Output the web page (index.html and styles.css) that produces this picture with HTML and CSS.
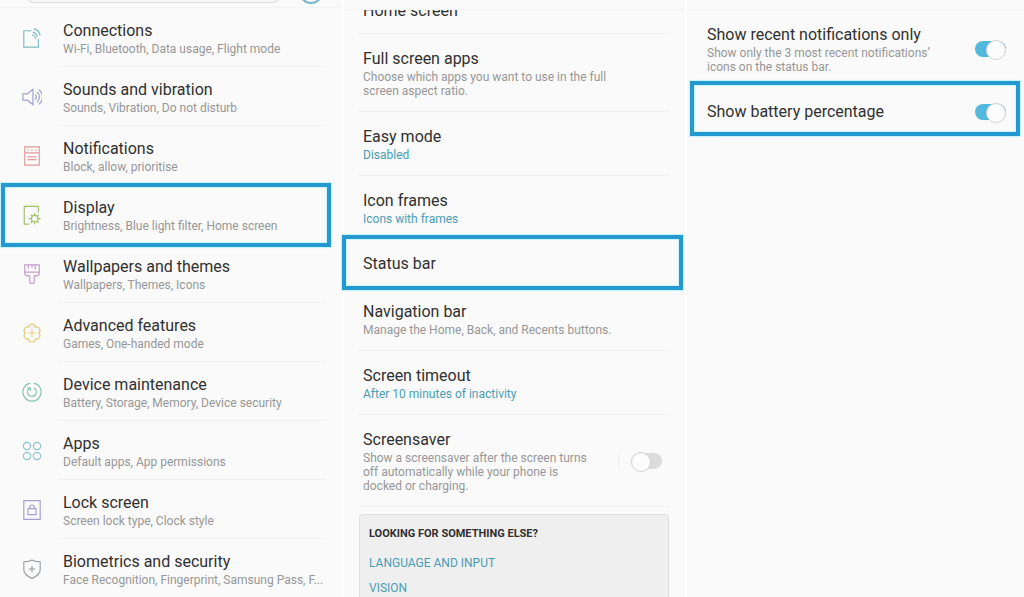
FILE: index.html
```html
<!DOCTYPE html>
<html lang="en">
<head>
    <meta charset="UTF-8">
    <meta name="viewport" content="width=device-width, initial-scale=1.0">
    <title>Settings</title>
    <link rel="stylesheet" href="styles.css">
</head>
<body>
    <main class="screens">

        <!-- Settings list -->
        <section class="screen screen-settings">
            <div class="topbar">
                <div class="search-box"></div>
                <div class="avatar"></div>
            </div>
            <a href="#" class="row">
                <svg class="icon teal" viewBox="0 0 22 22"><path d="M10 3H2v18h16v-9M11 8a4 4 0 0 1 4 4M12 4.500a7 7 0 0 1 5 5M13 1a9 9 0 0 1 7 7"/></svg>
                <span class="text">
                    <span class="title">Connections</span>
                    <span class="sub">Wi-Fi, Bluetooth, Data usage, Flight mode</span>
                </span>
            </a>
            <a href="#" class="row">
                <svg class="icon indigo" viewBox="0 0 22 22"><path d="M1 7.500v7h5l6 5v-17l-6 5zM14.500 8a4 4 0 0 1 0 6M16.500 5.500a7 7 0 0 1 0 11M18.500 3a10 10 0 0 1 0 16"/></svg>
                <span class="text">
                    <span class="title">Sounds and vibration</span>
                    <span class="sub">Sounds, Vibration, Do not disturb</span>
                </span>
            </a>
            <a href="#" class="row">
                <svg class="icon red" viewBox="0 0 22 22"><path d="M3 1h16v20H3zM3 7.500h16M6 12h10M6 15h10M6 4.500h1.500M10.200 4.500h1.500M14.500 4.500H16"/></svg>
                <span class="text">
                    <span class="title">Notifications</span>
                    <span class="sub">Block, allow, prioritise</span>
                </span>
            </a>
            <a href="#" class="row highlight">
                <svg class="icon green" viewBox="0 0 22 22"><path d="M8 21H2.500V1.500H18V8"/><circle cx="14" cy="15" r="3.500"/><path d="M14 8.500v3M14 18.500v3M7.500 15h3M17.500 15h3M9.500 10.500l2 2M16.500 17.500l2 2M18.500 10.500l-2 2M11.500 17.500l-2 2"/></svg>
                <span class="text">
                    <span class="title">Display</span>
                    <span class="sub">Brightness, Blue light filter, Home screen</span>
                </span>
            </a>
            <a href="#" class="row">
                <svg class="icon purple" viewBox="0 0 22 22"><path d="M3 1h16v10l-2 2h-3.500v6a2.500 2.500 0 0 1-5 0v-6H5l-2-2zM3 9h16M7 1v4M11 1v3M14.500 1v5"/></svg>
                <span class="text">
                    <span class="title">Wallpapers and themes</span>
                    <span class="sub">Wallpapers, Themes, Icons</span>
                </span>
            </a>
            <a href="#" class="row">
                <svg class="icon yellow" viewBox="0 0 22 22"><path d="M7.400 4.800A3.600 3.600 0 0 1 14.600 4.800A3.600 3.600 0 0 1 18.200 11A3.600 3.600 0 0 1 14.600 17.200A3.600 3.600 0 0 1 7.400 17.200A3.600 3.600 0 0 1 3.800 11A3.600 3.600 0 0 1 7.400 4.800zM11 7v8M7 11h8"/></svg>
                <span class="text">
                    <span class="title">Advanced features</span>
                    <span class="sub">Games, One-handed mode</span>
                </span>
            </a>
            <a href="#" class="row">
                <svg class="icon mint" viewBox="0 0 22 22"><path d="M13 1.200a10 10 0 1 1-4 0M13 6.600a4.800 4.800 0 1 1-4.500 0.200M6 6.500h3V10"/></svg>
                <span class="text">
                    <span class="title">Device maintenance</span>
                    <span class="sub">Battery, Storage, Memory, Device security</span>
                </span>
            </a>
            <a href="#" class="row">
                <svg class="icon sky" viewBox="0 0 22 22"><circle cx="5.500" cy="5.500" r="4"/><circle cx="16.500" cy="5.500" r="4"/><circle cx="5.500" cy="16.500" r="4"/><circle cx="16.500" cy="16.500" r="4"/></svg>
                <span class="text">
                    <span class="title">Apps</span>
                    <span class="sub">Default apps, App permissions</span>
                </span>
            </a>
            <a href="#" class="row">
                <svg class="icon violet" viewBox="0 0 22 22"><path d="M2 0.700h18v20.600H2zM6.500 9.500h9v6.500h-9zM8.500 9.500V8a2.500 2.500 0 0 1 5 0v1.500"/></svg>
                <span class="text">
                    <span class="title">Lock screen</span>
                    <span class="sub">Screen lock type, Clock style</span>
                </span>
            </a>
            <a href="#" class="row">
                <svg class="icon slate" viewBox="0 0 22 22"><path d="M11 1c3 2 6 2 9 2v9c0 4-4 7-9 9.300C6 19 2 16 2 12V3c3 0 6 0 9-2zM11 7.500v7M7.500 11h7"/></svg>
                <span class="text">
                    <span class="title">Biometrics and security</span>
                    <span class="sub">Face Recognition, Fingerprint, Samsung Pass, F...</span>
                </span>
            </a>
        </section>

        <!-- Display settings -->
        <section class="screen screen-display">
            <div class="topbar"></div>
            <div class="scrolled">
                <a href="#" class="row">
                    <span class="title">Home screen</span>
                </a>
            </div>
            <a href="#" class="row">
                <span class="text">
                    <span class="title">Full screen apps</span>
                    <span class="sub">Choose which apps you want to use in the full screen aspect ratio.</span>
                </span>
            </a>
            <a href="#" class="row">
                <span class="text">
                    <span class="title">Easy mode</span>
                    <span class="sub value">Disabled</span>
                </span>
            </a>
            <a href="#" class="row">
                <span class="text">
                    <span class="title">Icon frames</span>
                    <span class="sub value">Icons with frames</span>
                </span>
            </a>
            <a href="#" class="row single highlight">
                <span class="title">Status bar</span>
            </a>
            <a href="#" class="row">
                <span class="text">
                    <span class="title">Navigation bar</span>
                    <span class="sub">Manage the Home, Back, and Recents buttons.</span>
                </span>
            </a>
            <a href="#" class="row">
                <span class="text">
                    <span class="title">Screen timeout</span>
                    <span class="sub value">After 10 minutes of inactivity</span>
                </span>
            </a>
            <div class="row">
                <label class="text" for="screensaver">
                    <span class="title">Screensaver</span>
                    <span class="sub">Show a screensaver after the screen turns off automatically while your phone is docked or charging.</span>
                </label>
                <span class="separator"></span>
                <input type="checkbox" id="screensaver" class="toggle">
            </div>
            <div class="more">
                <h2>LOOKING FOR SOMETHING ELSE?</h2>
                <a href="#">LANGUAGE AND INPUT</a>
                <a href="#">VISION</a>
            </div>
        </section>

        <!-- Status bar settings -->
        <section class="screen screen-status">
            <div class="topbar"></div>
            <div class="row">
                <label class="text" for="recent">
                    <span class="title">Show recent notifications only</span>
                    <span class="sub">Show only the 3 most recent notifications’ icons on the status bar.</span>
                </label>
                <input type="checkbox" id="recent" class="toggle" checked>
            </div>
            <div class="row single highlight">
                <label class="title" for="battery">Show battery percentage</label>
                <input type="checkbox" id="battery" class="toggle" checked>
            </div>
        </section>

    </main>
</body>
</html>
```
FILE: styles.css
```css
* {
    box-sizing: border-box;
}
body {
    margin: 0;
    font-family: Roboto, sans-serif;
    background-color: #fafafa;
    color: #303030;
}
a {
    color: inherit;
    text-decoration: none;
}
.screens {
    display: grid;
    grid-template-columns: 342fr 343fr 339fr;
    height: 100vh;
    overflow: hidden;
}
.screen {
    min-width: 0;
}
.screen + .screen {
    border-left: 2px solid #fff;
}
.topbar {
    display: flex;
    align-items: flex-end;
    height: 10px;
    border-bottom: 1px solid #f3f3f3;
}

/* Rows */
.row {
    position: relative;
    display: flex;
    align-items: center;
    margin: 0 16px 0 15px;
    padding: 14px 4px 13px;
    border-bottom: 1px solid #f0f0f0;
}
.text {
    flex: 1;
    min-width: 0;
}
.title {
    display: block;
    font-size: 16px;
    line-height: 22px;
}
.sub {
    display: block;
    font-size: 12px;
    line-height: 14px;
    color: #979797;
}
.sub.value {
    color: #4a9db5;
}
.highlight {
    border-bottom-color: transparent;
}
.highlight::after {
    content: "";
    position: absolute;
    border: 4px solid #2499cf;
    box-shadow: 0 0 1px 1px #c8f4ff, inset 0 0 1px 1px #c8f4ff;
    pointer-events: none;
}

/* Settings list */
.screen-settings .topbar {
    height: 8px;
}
.search-box {
    width: 252px;
    height: 8px;
    margin: 0 20px 4px 27px;
    border: 1px solid #dcdcdc;
    border-top: none;
    border-radius: 0 0 6px 6px;
    background-color: #f6f6f6;
}
.avatar {
    width: 24px;
    height: 24px;
    margin-bottom: 3px;
    border: 2px solid #78b4cc;
    border-radius: 50%;
}
.screen-settings .row {
    margin: 0 16px 0 0;
    padding: 12px 2px 11px 22px;
    border-bottom: none;
}
.screen-settings .row::before {
    content: "";
    position: absolute;
    left: 58px;
    right: 0;
    bottom: 0;
    border-bottom: 1px solid #f0f0f0;
}
.screen-settings .sub {
    white-space: nowrap;
}
.screen-settings .highlight::before {
    display: none;
}
.screen-settings .highlight::after {
    inset: -2px -5px -3px 1px;
}
.icon {
    width: 20px;
    height: 20px;
    margin-right: 21px;
    fill: none;
    stroke: currentColor;
    stroke-width: 1.3;
}
.teal {
    color: #7dbcc0;
}
.indigo {
    color: #a0a0cc;
}
.red {
    color: #e39a9a;
}
.green {
    color: #a3c26c;
}
.purple {
    color: #c49ccb;
}
.yellow {
    color: #e6cf80;
}
.mint {
    color: #82c6ac;
}
.sky {
    color: #8cc3d2;
}
.violet {
    color: #a79fd6;
}
.slate {
    color: #9a9fa5;
}

/* Display settings */
.scrolled {
    display: flex;
    flex-direction: column;
    justify-content: flex-end;
    height: 24px;
    overflow: hidden;
}
.scrolled .row {
    padding-bottom: 11px;
}
.screen-display .single {
    padding: 13px 4px 11px;
}
.screen-display .highlight::after {
    inset: -5px -14px -4px -17px;
}
.screen-display .row .sub {
    max-width: 250px;
}
.screen-display div.row {
    padding-right: 7px;
}
.screen-display div.row .sub {
    max-width: 226px;
}
.separator {
    height: 16px;
    margin-right: 12px;
    border-left: 1px solid #f0f0f0;
}
.more {
    margin: 7px 16px 0 15px;
    padding: 9px;
    height: 120px;
    border: 1px solid #dedede;
    border-radius: 4px;
    background-color: #efefef;
}
.more h2 {
    margin: 0 0 7px;
    font-size: 11px;
    line-height: 20px;
}
.more a {
    display: block;
    font-size: 12px;
    line-height: 25px;
    color: #4a9db5;
}

/* Status bar settings */
.screen-status .row {
    margin-left: 16px;
    padding: 14px 2px 10px 4px;
    border-bottom: none;
}
.screen-status .sub {
    max-width: 230px;
}
.screen-status .single {
    justify-content: space-between;
    padding: 17px 2px 11px 4px;
}
.screen-status .highlight::after {
    inset: -3px -12px -2px -13px;
}

/* Toggle switch */
.toggle {
    appearance: none;
    position: relative;
    width: 31px;
    height: 16px;
    margin: 0;
    border-radius: 8px;
    background-color: #dcdcdc;
}
.toggle::before {
    content: "";
    position: absolute;
    top: -1px;
    left: 0;
    width: 18px;
    height: 18px;
    border: 1px solid #d4d4d4;
    border-radius: 50%;
    background-color: #fcfcfc;
}
.toggle:checked {
    background-color: #52b9dc;
}
.toggle:checked::before {
    left: auto;
    right: 0;
}
```
